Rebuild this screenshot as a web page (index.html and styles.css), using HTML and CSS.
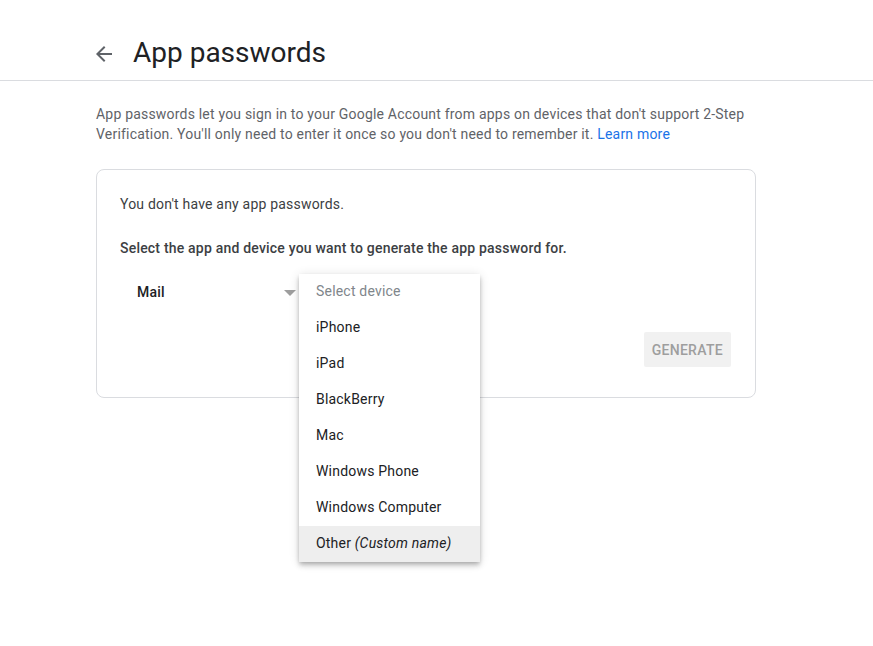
FILE: index.html
```html
<!DOCTYPE html>
<html lang="en">
<head>
<meta charset="UTF-8" />
<title>App passwords</title>
<link rel="stylesheet" href="styles.css">
</head>
<body>

  <!-- Page header -->
  <header class="page-header">
    <div class="header-inner">
      <a class="back" href="#" aria-label="Back">
        <svg viewBox="0 0 24 24" width="24" height="24"><path d="M20 11H7.83l5.59-5.59L12 4l-8 8 8 8 1.41-1.41L7.83 13H20v-2z"/></svg>
      </a>
      <h1>App passwords</h1>
    </div>
  </header>

  <main class="content">
    <p class="intro">App passwords let you sign in to your Google Account from apps on devices that don't support 2-Step Verification. You'll only need to enter it once so you don't need to remember it. <a href="#">Learn more</a></p>

    <section class="card">
      <p class="empty">You don't have any app passwords.</p>
      <p class="prompt">Select the app and device you want to generate the app password for.</p>

      <div class="selects">
        <div class="select app-select">
          <span class="value">Mail</span>
          <span class="caret"></span>
        </div>
        <div class="select device-select">
          <span class="value placeholder">Select device</span>
          <span class="caret"></span>

          <!-- open dropdown list -->
          <ul class="menu" role="listbox">
            <li class="placeholder">Select device</li>
            <li>iPhone</li>
            <li>iPad</li>
            <li>BlackBerry</li>
            <li>Mac</li>
            <li>Windows Phone</li>
            <li>Windows Computer</li>
            <li class="active">Other <em>(Custom name)</em></li>
          </ul>
        </div>
      </div>

      <div class="actions">
        <button class="btn-generate" disabled>Generate</button>
      </div>
    </section>
  </main>

</body>
</html>
```

FILE: styles.css
```css
html, body {
  min-height: 100%;
}

body {
  margin: 0;
  min-height: 646px;
  font-family: Roboto, Arial, sans-serif;
  background: #fff;
  color: #3c4043;
}

/* Header */
.page-header {
  border-bottom: 1px solid #dadce0;
  height: 81px;
  box-sizing: border-box;
}

.header-inner {
  margin-left: 96px;
  padding-top: 35px;
  display: flex;
  align-items: center;
}

.back {
  display: flex;
  margin-left: -4px;
  margin-right: 17px;
  margin-top: 2px;
}

.back svg {
  fill: #5f6368;
}

.page-header h1 {
  margin: 0;
  font-size: 28px;
  line-height: 36px;
  font-weight: 400;
  color: #202124;
}

/* Content */
.content {
  margin-left: 96px;
  width: 660px;
  letter-spacing: 0.2px;
}

.intro {
  margin: 23px 0 25px;
  font-size: 14px;
  line-height: 20px;
  color: #5f6368;
}

.intro a {
  color: #1a73e8;
  text-decoration: none;
}

.card {
  border: 1px solid #dadce0;
  border-radius: 8px;
  padding: 24px 24px 30px 23px;
}

.card p {
  margin: 0;
  font-size: 14px;
  line-height: 20px;
}

.empty {
  color: #3c4043;
}

.card .prompt {
  margin-top: 24px;
  font-weight: 500;
  color: #3c4043;
}

/* Selects */
.selects {
  display: flex;
  margin-top: 16px;
  height: 36px;
}

.select {
  position: relative;
  display: flex;
  align-items: center;
  font-size: 14px;
  box-sizing: border-box;
}

.app-select {
  width: 179px;
  padding-left: 17px;
  font-weight: 500;
  color: #202124;
}

.device-select {
  width: 181px;
  padding-left: 17px;
  z-index: 2;
}

.caret {
  position: absolute;
  right: 3px;
  top: 16px;
  width: 0;
  height: 0;
  border-left: 6px solid transparent;
  border-right: 6px solid transparent;
  border-top: 6px solid #9e9e9e;
}

.placeholder {
  color: #80868b;
}

/* Dropdown menu */
.menu {
  position: absolute;
  top: 0;
  left: 0;
  width: 181px;
  margin: 0;
  padding: 0;
  list-style: none;
  background: #fff;
  box-shadow:
    0 2px 4px -1px rgba(0, 0, 0, 0.2),
    0 4px 5px 0 rgba(0, 0, 0, 0.14),
    0 1px 10px 0 rgba(0, 0, 0, 0.12);
}

.menu li {
  height: 36px;
  line-height: 35px;
  padding-left: 17px;
  font-size: 14px;
  color: #202124;
}

.menu li.placeholder {
  color: #80868b;
}

.menu li.active {
  background: #eeeeee;
}

.menu em {
  font-style: italic;
}

/* Actions */
.actions {
  display: flex;
  justify-content: flex-end;
  margin-top: 22px;
}

.btn-generate {
  height: 35px;
  padding: 0 8px;
  border: none;
  border-radius: 2px;
  background: #f1f1f1;
  color: #9e9e9e;
  font-family: Roboto, Arial, sans-serif;
  font-size: 14px;
  font-weight: 500;
  text-transform: uppercase;
  letter-spacing: 0.3px;
}
```
